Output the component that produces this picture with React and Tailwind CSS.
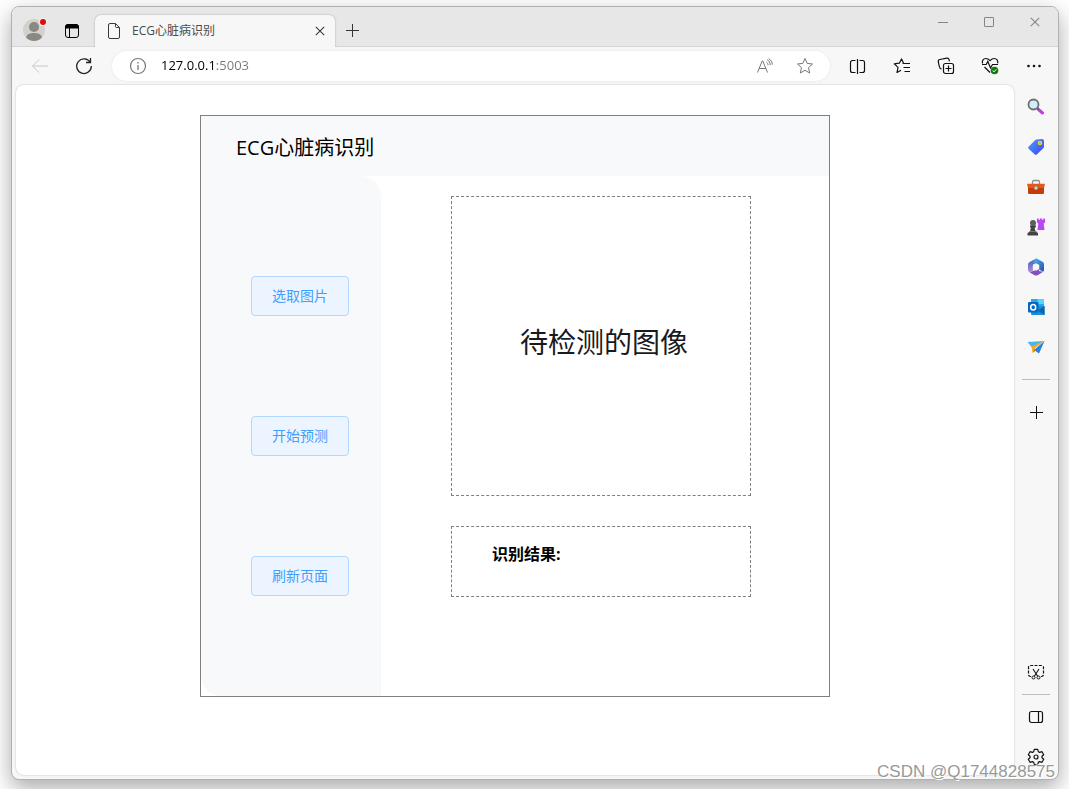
const ICON = "fill-none stroke-current";

const ProfileIcon = () => (
  <svg width="26" height="26" viewBox="0 0 26 26" aria-hidden="true">
    <circle cx="12" cy="14" r="11" fill="#d3d1cd" />
    <circle cx="12" cy="11" r="5" fill="#8b8883" />
    <path d="M4 21.5c1-3.4 4-4.5 8-4.5s7 1.100 8 4.500a11 11 0 0 1-16 0Z" fill="#8b8883" />
    <circle cx="21" cy="6" r="4" fill="#f0f0f0" />
    <circle cx="21" cy="6" r="3" fill="#e00b0b" />
  </svg>
);

const WorkspacesIcon = () => (
  <svg width="16" height="16" viewBox="0 0 16 16" className={ICON} aria-hidden="true">
    <rect x="1.500" y="1.500" width="13" height="13" rx="2.500" />
    <path d="M1.500 5V4A2.500 2.500 0 0 1 4 1.500h8A2.500 2.500 0 0 1 14.500 4v1Z" fill="currentColor" />
    <path d="M5.500 5v9.500" />
  </svg>
);

const PageIcon = () => (
  <svg width="14" height="18" viewBox="0 0 14 18" className={ICON} aria-hidden="true">
    <path d="M3 1.500h5.500l4 4V15a1.500 1.500 0 0 1-1.500 1.500H3A1.500 1.500 0 0 1 1.500 15V3A1.500 1.500 0 0 1 3 1.500ZM8.500 1.500v3a1 1 0 0 0 1 1h3" />
  </svg>
);

const CloseIcon = () => (
  <svg width="10" height="10" viewBox="0 0 10 10" className={ICON} aria-hidden="true">
    <path d="m.8.800 8.400 8.400M9.200.8.800 9.200" strokeWidth="1.100" />
  </svg>
);

const PlusIcon = () => (
  <svg width="15" height="15" viewBox="0 0 15 15" className={ICON} aria-hidden="true">
    <path d="M7.500 1v13M1 7.500h13" />
  </svg>
);

const BackIcon = () => (
  <svg width="18" height="16" viewBox="0 0 18 16" className={ICON} aria-hidden="true">
    <path d="M8 1.500 1.500 8 8 14.500M1.500 8H17" />
  </svg>
);

const RefreshIcon = () => (
  <svg width="18" height="18" viewBox="0 0 18 18" className={ICON} aria-hidden="true">
    <path d="M15.300 5.500A7.300 7.300 0 1 0 16.300 9" strokeWidth="1.300" />
    <path d="M15.500 1v4.500H11" strokeWidth="1.300" />
  </svg>
);

const InfoIcon = () => (
  <svg width="18" height="18" viewBox="0 0 18 18" className={ICON} aria-hidden="true">
    <circle cx="9" cy="9" r="7.500" strokeWidth="1.200" />
    <path d="M9 8v5M9 5v1.500" strokeWidth="1.300" />
  </svg>
);

const ReadAloudIcon = () => (
  <svg width="18" height="16" viewBox="0 0 18 16" className={ICON} aria-hidden="true">
    <path d="M1.500 14.500 6.200 3h.6l4.700 11.500M3.200 10.500h6.600M10.500 4.200c1 .7 1.500 1.700 1.500 3M11.300 1.800c2 1.100 2.900 2.900 2.900 5.400M12.600.500c2.500 1.500 3.700 3.800 3.700 6.200" />
  </svg>
);

const StarIcon = () => (
  <svg width="18" height="18" viewBox="0 0 18 18" className={ICON} aria-hidden="true">
    <path d="m9 1.500 2.200 4.900 5.300.6-4 3.600 1.200 5.400L9 13.300 4.300 16l1.200-5.400-4-3.600 5.300-.6Z" strokeLinejoin="round" />
  </svg>
);

const SplitIcon = () => (
  <svg width="18" height="17" viewBox="0 0 18 17" className={ICON} aria-hidden="true">
    <path d="M6.500 2.500h-3A2 2 0 0 0 1.500 4.500v8a2 2 0 0 0 2 2h3M10.500 2.500h3a2 2 0 0 1 2 2v8a2 2 0 0 1-2 2h-3M8.500 1v15" strokeWidth="1.200" />
  </svg>
);

const FavoritesIcon = () => (
  <svg width="18" height="16" viewBox="0 0 18 16" className={ICON} aria-hidden="true">
    <path d="M10.500 5 8.500.9 6.300 5.200l-5 .7L5 9.400l-1 5.100L8 12.200M10.500 5.500h6.500M10.500 9.500h6.500M11.500 13.500h5.500M9.500 5.200l1.500.3" strokeWidth="1.200" strokeLinejoin="round" />
  </svg>
);

const CollectionsIcon = () => (
  <svg width="18" height="18" viewBox="0 0 18 18" className={ICON} aria-hidden="true">
    <rect x="6.500" y="6.500" width="10" height="10" rx="2" strokeWidth="1.200" />
    <path d="M11.500 8.500v6M8.500 11.500h6M4.500 11.800C3 11.800 2.600 11 2.300 9.500l-1-4.700c-.2-1.300.3-2.100 1.500-2.300l7-1.300c1.300-.2 2 .3 2.300 1.500l.3 1.600" strokeWidth="1.200" />
  </svg>
);

const EssentialsIcon = () => (
  <svg width="18" height="18" viewBox="0 0 18 18" className={ICON} aria-hidden="true">
    <path d="M1.500 6.500c-.8-3 1-5 3.300-5 1.700 0 2.900.8 4.200 2.200 1.300-1.400 2.500-2.200 4.200-2.200 2.300 0 4.100 2 3.500 4.800M1 7.500h4.200l1.600-3 2.700 6.500 2-3.500H17M3.500 10l5.500 5.500" strokeWidth="1.200" />
    <circle cx="13.500" cy="13.500" r="3.800" className="fill-[#107c10] stroke-none" />
    <path d="m11.700 13.600 1.300 1.200 2.300-2.400" stroke="#fff" />
  </svg>
);

const MoreIcon = () => (
  <svg width="16" height="4" viewBox="0 0 16 4" fill="currentColor" aria-hidden="true">
    <circle cx="2.500" cy="2" r="1.300" />
    <circle cx="8" cy="2" r="1.300" />
    <circle cx="13.500" cy="2" r="1.300" />
  </svg>
);

const SearchIcon = () => (
  <svg width="18" height="18" viewBox="0 0 18 18" aria-hidden="true">
    <path d="m11.500 11.500 4 3.500" stroke="#c239e8" strokeWidth="3" strokeLinecap="round" />
    <path d="m9.500 9.500 2 2" stroke="#555" strokeWidth="2" />
    <circle cx="6.500" cy="6.500" r="5" fill="#d2edfb" stroke="#6e6e6e" strokeWidth="1.800" />
  </svg>
);

const ShoppingIcon = () => (
  <svg width="18" height="18" viewBox="0 0 18 18" aria-hidden="true">
    <defs>
      <linearGradient id="tag" x1="0" y1="0" x2="1" y2="1">
        <stop offset="0" stopColor="#4ba0fa" />
        <stop offset="1" stopColor="#4142ef" />
      </linearGradient>
    </defs>
    <path d="M9.500 1.500 15 1c1.200 0 2 .8 2 2v5.500c0 .8-.3 1.300-.8 1.800L10 16.200c-.8.800-1.600.8-2.400 0l-5.800-5.300c-.8-.8-.8-1.600 0-2.400L8 2.200c.4-.4.900-.7 1.500-.7Z" fill="url(#tag)" />
    <circle cx="13" cy="5" r="1.700" fill="#a8a8cf" stroke="#f5ce28" strokeWidth="1.200" />
  </svg>
);

const ToolsIcon = () => (
  <svg width="18" height="16" viewBox="0 0 18 16" aria-hidden="true">
    <path d="M5.500 5V3c0-1 .5-1.500 1.500-1.500h4c1 0 1.500.5 1.500 1.500v2" fill="none" stroke="#8b8f94" strokeWidth="1.300" />
    <rect x="1" y="7" width="16" height="8" rx="1.200" fill="#c13b0b" />
    <path d="M.3 4.800h17.400c.3 1.700-.3 3.800-1.700 4.200H2C.6 8.600 0 6.500.3 4.800Z" fill="#e4581a" />
    <circle cx="9" cy="9" r="2" fill="#d0d4d6" stroke="#8d4b31" strokeWidth=".5" />
  </svg>
);

const GamesIcon = () => (
  <svg width="20" height="20" viewBox="0 0 20 20" aria-hidden="true">
    <path d="M11 1.500h1.700v1.300H14V1.500h2v1.300h1.300V1.500H19v4l-1.300 1 .8 6.500h-7l.8-6.500-1.300-1Z" fill="#ba49f5" />
    <circle cx="7" cy="6" r="3" fill="#5e5e5e" />
    <path d="M4 8.500h6v1.300L8.700 11l.8 3.500 2.500 1.500v2.500H1.500V16L4 14.500l.8-3.500L4 9.800Z" fill="#444" />
    <path d="M3.500 14.500h7" stroke="#777" />
  </svg>
);

const OfficeIcon = () => (
  <svg width="18" height="18" viewBox="0 0 18 18" aria-hidden="true">
    <defs>
      <linearGradient id="m365a" x1="0" y1="0" x2="0" y2="1">
        <stop offset="0" stopColor="#3c5cba" />
        <stop offset="1" stopColor="#b48be0" />
      </linearGradient>
      <linearGradient id="m365b" x1="0" y1="0" x2="1" y2="1">
        <stop offset="0" stopColor="#48b8f2" />
        <stop offset="1" stopColor="#314ab4" />
      </linearGradient>
    </defs>
    <path d="M9.500.5 3 3.800C1.500 4.600 1 5.500 1 7v4.500c0 1.300.6 2.200 1.700 2.800L6 12.500V6.800l4.500-2Z" fill="url(#m365a)" />
    <path d="m8 1 1.500-.5 6 3.300c1 .6 1.500 1.500 1.500 2.700v5.200c0 .8-.3 1.500-.8 2L12 11.500V7L6 5Z" fill="url(#m365b)" />
    <path d="m2.500 14.200 5-1.700L12 10v3l4.200.7-5.200 3.200c-1.300.8-2.500.8-3.800 0Z" fill="#8350bd" />
    <path d="M9 5.300 12.200 7.100v3.800L9 12.700l-3.200-1.800V7.100Z" fill="#f7f7f7" />
  </svg>
);

const OutlookIcon = () => (
  <svg width="18" height="18" viewBox="0 0 18 18" aria-hidden="true">
    <path d="M4 1h13v9H4Z" fill="#28a8ea" />
    <path d="M10.500 1H17v5h-6.500Z" fill="#50d9ff" />
    <path d="M4 8h13.500v9H5.500C4.500 17 4 16.500 4 15.500Z" fill="#1490df" />
    <path d="M17.500 8v9L11 12.500Z" fill="#0b63ae" />
    <rect x="1" y="4" width="10.500" height="10.500" rx="1" fill="#0769bd" />
    <ellipse cx="6.200" cy="9.200" rx="2.500" ry="2.800" fill="none" stroke="#fff" strokeWidth="1.500" />
  </svg>
);

const DropIcon = () => (
  <svg width="18" height="16" viewBox="0 0 18 16" aria-hidden="true">
    <path d="M17.500 2 12 14.500 7 11Z" fill="#2681e5" />
    <path d="M.5 3 17.500 2 5 8.500Z" fill="#42b9ef" />
    <path d="M4.500 7.500 17.500 2 7.500 9.500 5.500 14Z" fill="#f4aa20" />
    <path d="m5.500 14 2-4.500 1.800 1.800Z" fill="#c77810" />
  </svg>
);

const ScreenshotIcon = () => (
  <svg width="18" height="16" viewBox="0 0 18 16" className={ICON} aria-hidden="true">
    <path d="M4 12.500H3.500a2 2 0 0 1-2-2v-7a2 2 0 0 1 2-2h11a2 2 0 0 1 2 2v7a2 2 0 0 1-2 2H14" strokeWidth="1.200" strokeDasharray="3 1.300" />
    <path d="m6 5 4.700 7.300M12 5l-4.700 7.300" strokeWidth="1.100" />
    <circle cx="6.500" cy="13.500" r="1.500" />
    <circle cx="11.500" cy="13.500" r="1.500" />
  </svg>
);

const PanelIcon = () => (
  <svg width="16" height="14" viewBox="0 0 16 14" className={ICON} aria-hidden="true">
    <rect x="1.500" y="1.500" width="13" height="11" rx="2" strokeWidth="1.200" />
    <path d="M10.500 1.500v11" strokeWidth="1.200" />
  </svg>
);

const GearIcon = () => (
  <svg width="18" height="18" viewBox="0 0 18 18" className={ICON} aria-hidden="true">
    <path d="M7.300 1.300h3.400l.6 2.400 1.300.7 2.400-.7 1.700 3L15 8.300v1.400l1.700 1.600-1.700 3-2.400-.7-1.300.7-.6 2.400H7.300l-.6-2.400-1.300-.7-2.400.7-1.700-3L3 9.700V8.300L1.300 6.700l1.700-3 2.400.7 1.300-.7Z" strokeWidth="1.200" strokeLinejoin="round" />
    <circle cx="9" cy="9" r="2" strokeWidth="1.200" />
  </svg>
);

const toolbarActions = [
  { label: "Split screen", Icon: SplitIcon },
  { label: "Favorites", Icon: FavoritesIcon },
  { label: "Collections", Icon: CollectionsIcon },
  { label: "Browser essentials", Icon: EssentialsIcon },
  { label: "Settings and more", Icon: MoreIcon },
];

const sidebarApps = [
  { label: "Search", Icon: SearchIcon },
  { label: "Shopping", Icon: ShoppingIcon },
  { label: "Tools", Icon: ToolsIcon },
  { label: "Games", Icon: GamesIcon },
  { label: "Microsoft 365", Icon: OfficeIcon },
  { label: "Outlook", Icon: OutlookIcon },
  { label: "Drop", Icon: DropIcon },
];

const actions = ["选取图片", "开始预测", "刷新页面"];

function IconButton({ label, className, children }) {
  return (
    <button
      type="button"
      aria-label={label}
      className={`flex shrink-0 items-center justify-center ${className}`}
    >
      {children}
    </button>
  );
}

function TitleBar() {
  return (
    <div className="flex h-10 border-b border-[#d4d4d4] bg-[#e7e7e7]">
      <div className="flex items-center gap-4 pl-2.5 pt-2">
        <IconButton label="Profile" className="-mt-1">
          <ProfileIcon />
        </IconButton>
        <IconButton label="Workspaces" className="">
          <WorkspacesIcon />
        </IconButton>
      </div>

      {/* Active tab */}
      <div className="-mb-px ml-[15px] mt-2 flex w-60 items-center rounded-t-md bg-[#f7f7f7] pl-3 pr-2.5 text-[#3a3a3a] shadow-[0_0_2px_rgba(0,0,0,0.3)] [clip-path:inset(-4px_-4px_0_-4px)]">
        <PageIcon />
        <span className="ml-[11px] flex-1 text-xs font-normal text-[#4a4a4a]">ECG心脏病识别</span>
        <IconButton label="Close tab" className="">
          <CloseIcon />
        </IconButton>
      </div>
      <IconButton label="New tab" className="ml-[7px] mt-2 w-5 text-[#333]">
        <PlusIcon />
      </IconButton>

      {/* Window controls */}
      <div className="ml-auto flex h-[30px] text-[#858585]">
        <IconButton label="Minimize" className="w-[46px]">
          <span className="w-2.5 border-t border-current" />
        </IconButton>
        <IconButton label="Maximize" className="w-[46px]">
          <span className="size-2.5 rounded-[1px] border border-current" />
        </IconButton>
        <IconButton label="Close" className="w-[46px]">
          <CloseIcon />
        </IconButton>
      </div>
    </div>
  );
}

function Toolbar() {
  return (
    <div className="flex h-[38px] items-center pl-1.5 pr-0.5">
      <IconButton label="Back" className="h-8 w-11 text-[#c8c8c8]">
        <BackIcon />
      </IconButton>
      <IconButton label="Refresh" className="h-8 w-11 text-[#222]">
        <RefreshIcon />
      </IconButton>

      <div className="mx-1.5 flex h-[30px] flex-1 items-center rounded-full bg-white pl-[17px] pr-[5px] text-[#767676] shadow-[0_0_3px_rgba(0,0,0,0.08)]">
        <InfoIcon />
        <input
          type="text"
          aria-label="Address"
          defaultValue="127.0.0.1:5003"
          className="ml-3.5 min-w-0 flex-1 bg-[linear-gradient(90deg,#000_54px,#767676_54px)] bg-clip-text font-['Open_Sans','Noto_Sans',sans-serif] text-[13px] text-transparent outline-none"
        />
        <IconButton label="Read aloud" className="w-10">
          <ReadAloudIcon />
        </IconButton>
        <IconButton label="Add to favorites" className="w-10">
          <StarIcon />
        </IconButton>
      </div>

      {toolbarActions.map(({ label, Icon }) => (
        <IconButton key={label} label={label} className="h-8 w-11 text-[#111]">
          <Icon />
        </IconButton>
      ))}
    </div>
  );
}

function Sidebar() {
  return (
    <aside className="flex w-11 flex-col items-center py-0.5 text-[#111]">
      {sidebarApps.map(({ label, Icon }) => (
        <IconButton key={label} label={label} className="size-10">
          <Icon />
        </IconButton>
      ))}
      <hr className="my-3 w-7 border-[#bdbdbd]" />
      <IconButton label="Customize" className="size-10">
        <PlusIcon />
      </IconButton>
      <IconButton label="Screenshot" className="mt-auto size-10">
        <ScreenshotIcon />
      </IconButton>
      <hr className="my-0.5 w-7 border-[#bdbdbd]" />
      <IconButton label="Toggle sidebar" className="size-10">
        <PanelIcon />
      </IconButton>
      <IconButton label="Settings" className="size-10">
        <GearIcon />
      </IconButton>
    </aside>
  );
}

function EcgPage() {
  return (
    <div className="mx-auto w-full max-w-[630px] border border-[#808080] bg-white">
      <header className="flex h-[60px] items-center bg-[#f7f9fb] px-[35px] pt-1">
        <h1 className="text-xl font-normal text-black">ECG心脏病识别</h1>
      </header>

      <div className="flex">
        <nav className="flex w-[180px] shrink-0 flex-col items-start gap-[100px] rounded-bl-[20px] rounded-tr-[20px] bg-[#f7f9fb] py-[100px] pl-[50px]">
          {actions.map((label) => (
            <button
              key={label}
              type="button"
              className="h-10 rounded border border-[#b3d8ff] bg-[#ecf5ff] px-5 text-sm font-normal text-[#409eff]"
            >
              {label}
            </button>
          ))}
        </nav>

        <main className="flex flex-1 flex-col gap-[30px] pl-[70px] pr-[78px] pt-5">
          <div className="flex h-[300px] items-center justify-center border border-dashed border-[#808080] pb-2 pl-1.5">
            <p className="text-[28px] font-normal text-[#1a1a1a]">待检测的图像</p>
          </div>
          <section className="h-[71px] border border-dashed border-[#808080] px-10 pt-[15px]">
            <h2 className="text-base font-bold text-black">识别结果:</h2>
          </section>
        </main>
      </div>
    </div>
  );
}

export default function App() {
  return (
    <div className="relative flex min-h-screen overflow-hidden bg-white pb-[9px] pl-[11px] pr-2.5 pt-1.5 font-['Open_Sans','Noto_Sans_CJK_SC',sans-serif]">
      <div className="flex flex-1 flex-col overflow-hidden rounded-lg border border-[#b0b0b0] bg-[#f7f7f7] shadow-[0_8px_22px_rgba(0,0,0,0.34)]">
        <TitleBar />
        <Toolbar />
        <div className="flex flex-1">
          <div className="mb-1 ml-1 flex-1 rounded-lg bg-white pt-[30px] shadow-[0_0_2px_rgba(0,0,0,0.25)]">
            <EcgPage />
          </div>
          <Sidebar />
        </div>
      </div>

      {/* Watermark */}
      <span className="pointer-events-none absolute bottom-[5px] right-3.5 font-['Liberation_Sans',sans-serif] text-[17px] leading-6 text-[#999] [text-shadow:1px_1px_0_#fff,-1px_-1px_0_rgba(255,255,255,0.6)]">
        CSDN @Q1744828575
      </span>
    </div>
  );
}
